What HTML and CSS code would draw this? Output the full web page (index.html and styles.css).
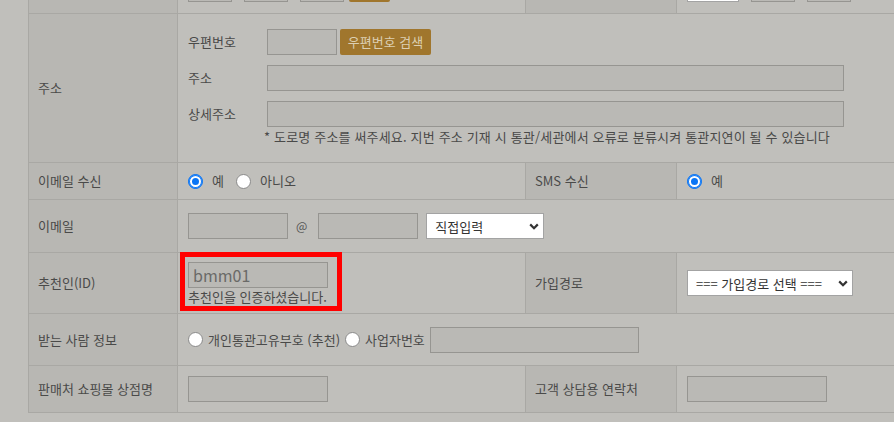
FILE: index.html
```html
<!DOCTYPE html>
<html lang="ko">
<head>
<meta charset="utf-8">
<title>회원정보</title>
<link rel="stylesheet" href="styles.css">
</head>
<body>
<div class="form">
  <!-- row 1 (partially visible) -->
  <div class="cell label"></div>
  <div class="cell field bottom">
    <input class="inp w44" type="text"><span class="dash"></span><input class="inp w44" type="text"><span class="dash"></span><input class="inp w44" type="text">
    <button class="btn btn-small" type="button"></button>
  </div>
  <div class="cell label"></div>
  <div class="cell field bottom">
    <input class="inp white w52" type="text"><span class="dash"></span><input class="inp w44" type="text"><span class="dash"></span><input class="inp w44" type="text">
  </div>

  <!-- 주소 -->
  <div class="cell label">주소</div>
  <div class="cell field span3 addr">
    <div class="addr-line">
      <span class="sub">우편번호</span>
      <input class="inp w70" type="text">
      <button class="btn" type="button">우편번호 검색</button>
    </div>
    <div class="addr-line">
      <span class="sub">주소</span>
      <input class="inp w577" type="text">
    </div>
    <div class="addr-line">
      <span class="sub">상세주소</span>
      <input class="inp w577" type="text">
    </div>
    <p class="note">* 도로명 주소를 써주세요. 지번 주소 기재 시 통관/세관에서 오류로 분류시켜 통관지연이 될 수 있습니다</p>
  </div>

  <!-- 이메일 수신 -->
  <div class="cell label">이메일 수신</div>
  <div class="cell field">
    <label class="opt"><input class="rb" type="radio" name="mail" checked><span>예</span></label>
    <label class="opt"><input class="rb" type="radio" name="mail"><span>아니오</span></label>
  </div>
  <div class="cell label">SMS 수신</div>
  <div class="cell field">
    <label class="opt"><input class="rb" type="radio" name="sms" checked><span>예</span></label>
  </div>

  <!-- 이메일 -->
  <div class="cell label">이메일</div>
  <div class="cell field span3">
    <input class="inp w100" type="text"><span class="at">@</span><input class="inp w100" type="text">
    <span class="sel w118">
      <select class="select"><option>직접입력</option></select>
      <svg class="chev" width="10" height="7" viewBox="0 0 10 7"><path d="M1.2 1.4 L5 5.2 L8.8 1.4" fill="none" stroke="#333" stroke-width="2.2"/></svg>
    </span>
  </div>

  <!-- 추천인 -->
  <div class="cell label">추천인(ID)</div>
  <div class="cell field top rec">
    <input class="inp w140 rec-inp" type="text" value="bmm01">
    <span class="rec-msg">추천인을 인증하셨습니다.</span>
    <div class="mark"></div>
  </div>
  <div class="cell label">가입경로</div>
  <div class="cell field">
    <span class="sel w166">
      <select class="select"><option>=== 가입경로 선택 ===</option></select>
      <svg class="chev" width="10" height="7" viewBox="0 0 10 7"><path d="M1.2 1.4 L5 5.2 L8.8 1.4" fill="none" stroke="#333" stroke-width="2.2"/></svg>
    </span>
  </div>

  <!-- 받는 사람 정보 -->
  <div class="cell label">받는 사람 정보</div>
  <div class="cell field span3 recv">
    <label class="opt2"><input class="rb" type="radio" name="recv"><span>개인통관고유부호 (추천)</span></label>
    <label class="opt2"><input class="rb" type="radio" name="recv"><span>사업자번호</span></label>
    <input class="inp w209" type="text">
  </div>

  <!-- 판매처 -->
  <div class="cell label">판매처 쇼핑몰 상점명</div>
  <div class="cell field"><input class="inp w140" type="text"></div>
  <div class="cell label">고객 상담용 연락처</div>
  <div class="cell field"><input class="inp w140" type="text"></div>
</div>
</body>
</html>
```
FILE: styles.css
```css
html, body {
  margin: 0;
  padding: 0;
  overflow: hidden;
  background: #c0bfbb;
}

body {
  font-family: "Noto Sans CJK KR", "Noto Sans", sans-serif;
  font-size: 13px;
  color: #4a4a49;
  width: 894px;
  height: 422px;
}

.form {
  display: grid;
  grid-template-columns: 149px 348px 151px 240px;
  grid-template-rows: 54px 149px 37px 53px 61px 52px 47px;
  margin: -40px 0 0 28px;
  border-left: 1px solid #a9a8a4;
  width: 889px;
}

.cell {
  box-sizing: border-box;
  border-right: 1px solid #a9a8a4;
  border-bottom: 1px solid #a9a8a4;
  display: flex;
  align-items: center;
  line-height: 18px;
  min-width: 0;
}

.label {
  background: #b8b7b3;
  padding-left: 9px;
}

.field {
  padding-left: 10px;
  white-space: nowrap;
}

.span3 { grid-column: span 3; }

.bottom {
  align-items: flex-end;
  padding-bottom: 11px;
}

.top { align-items: flex-start; }

/* inputs */
.inp {
  box-sizing: border-box;
  height: 26px;
  margin: 0;
  padding: 0 5px;
  border: 1px solid #969591;
  background: #bab9b5;
  font-family: inherit;
  color: #6a6a68;
  outline: none;
  border-radius: 0;
}
.inp.white { background: #fff; border-color: #a3a3a3; }

.w44 { width: 44px; }
.w52 { width: 52px; }
.w70 { width: 70px; }
.w100 { width: 100px; }
.w140 { width: 140px; }
.w209 { width: 209px; }
.w577 { width: 577px; }

.dash {
  display: inline-block;
  width: 12px;
}

.btn {
  box-sizing: border-box;
  height: 26px;
  width: 91px;
  margin: 0 0 0 3px;
  padding: 0;
  border: 0;
  border-radius: 2px;
  background: #a0762d;
  color: #dccfb2;
  font-family: inherit;
  font-size: 13px;
  line-height: 26px;
}
.btn-small { width: 41px; margin-left: 5px; }

/* address */
.addr {
  flex-direction: column;
  align-items: flex-start;
  padding-top: 15px;
}
.addr-line {
  display: flex;
  align-items: center;
  margin-bottom: 10px;
}
.addr-line:nth-child(3) { margin-bottom: 1px; }
.sub {
  width: 79px;
}
.note {
  margin: 0 0 0 76px;
  line-height: 18px;
  font-size: 13px;
  letter-spacing: 0.17px;
}

/* radios */
.rb {
  appearance: none;
  -webkit-appearance: none;
  box-sizing: border-box;
  width: 15px;
  height: 15px;
  margin: 0;
  border-radius: 50%;
  border: 1px solid #8a8a8a;
  background: #fff;
  flex: none;
}
.rb:checked {
  border-color: #0a75f5;
  background: #0a75f5;
  box-shadow: inset 0 0 0 1px #0a75f5, inset 0 0 0 3px #fff;
}

.opt {
  display: inline-flex;
  align-items: center;
  gap: 9px;
  margin-right: 12px;
}

.opt2 {
  display: inline-flex;
  align-items: center;
  gap: 5px;
  margin-right: 5px;
}
.recv .inp { margin-left: 0; }

.at {
  font-size: 12px;
  margin: 0 11px 0 8px;
  color: #555;
}

/* select */
.sel {
  position: relative;
  display: inline-block;
  height: 26px;
}
.sel.w118 { width: 118px; margin-left: 8px; }
.sel.w166 { width: 166px; }
.select {
  appearance: none;
  -webkit-appearance: none;
  box-sizing: border-box;
  width: 100%;
  height: 26px;
  margin: 0;
  padding: 0 0 0 8px;
  border: 1px solid #a3a3a3;
  border-radius: 0;
  background: #fff;
  color: #333;
  font-family: inherit;
  font-size: 13px;
  outline: none;
}
.chev {
  position: absolute;
  right: 5px;
  top: 10px;
  pointer-events: none;
}

/* 추천인 */
.rec {
  position: relative;
  flex-direction: column;
  padding-top: 9px;
}
.rec-inp {
  font-size: 16px;
  padding-left: 4px;
  color: #6a6a68;
}
.rec-msg {
  line-height: 17px;
  margin-top: 0;
}
.mark {
  position: absolute;
  left: 2px;
  top: -1px;
  width: 162px;
  height: 59px;
  box-sizing: border-box;
  border: 5px solid #ff0000;
}
```
